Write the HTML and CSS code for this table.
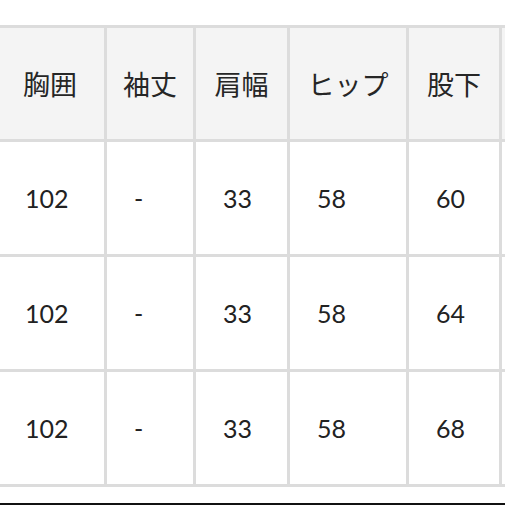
FILE: index.html
```html
<!DOCTYPE html>
<html lang="ja">
<head>
<meta charset="utf-8">
<link rel="stylesheet" href="styles.css">
</head>
<body>
<div class="page">
  <table class="size-table">
    <colgroup>
      <col class="c1"><col class="c2"><col class="c3"><col class="c4"><col class="c5"><col class="c6">
    </colgroup>
    <thead>
      <tr><th>胸囲</th><th>袖丈</th><th>肩幅</th><th>ヒップ</th><th>股下</th><th></th></tr>
    </thead>
    <tbody>
      <tr><td>102</td><td>-</td><td>33</td><td>58</td><td>60</td><td></td></tr>
      <tr><td>102</td><td>-</td><td>33</td><td>58</td><td>64</td><td></td></tr>
      <tr><td>102</td><td>-</td><td>33</td><td>58</td><td>68</td><td></td></tr>
    </tbody>
  </table>
  <div class="rule"></div>
</div>
</body>
</html>
```

FILE: styles.css
```css
html, body {
  margin: 0;
  padding: 0;
  background: #ffffff;
  overflow: hidden;
}
.page {
  width: 505px;
  height: 505px;
  overflow: hidden;
  position: relative;
}
.size-table {
  border-collapse: collapse;
  table-layout: fixed;
  width: 660px;
  margin-top: 25px;
  margin-left: -7px;
  color: #222222;
}
.c1 { width: 111px; }
.c2 { width: 89px; }
.c3 { width: 94px; }
.c4 { width: 119px; }
.c5 { width: 93px; }
.c6 { width: 154px; }
.size-table th,
.size-table td {
  border: 3px solid #dcdcdc;
  padding: 0;
  white-space: nowrap;
  overflow: hidden;
}
.size-table th {
  height: 111px;
  background: #f4f4f4;
  font-family: "Noto Sans CJK JP", "Noto Sans", sans-serif;
  font-weight: 400;
  font-size: 27px;
  text-align: center;
  color: #262626;
}
.size-table td {
  height: 112px;
  background: #ffffff;
  font-family: Lato, "Open Sans", sans-serif;
  font-size: 25px;
  text-align: left;
  padding-left: 27px;
}
.size-table tr td:first-child { padding-left: 29px; }
.rule {
  position: absolute;
  left: 0;
  right: 0;
  top: 503px;
  height: 2px;
  background: #111111;
}
```
